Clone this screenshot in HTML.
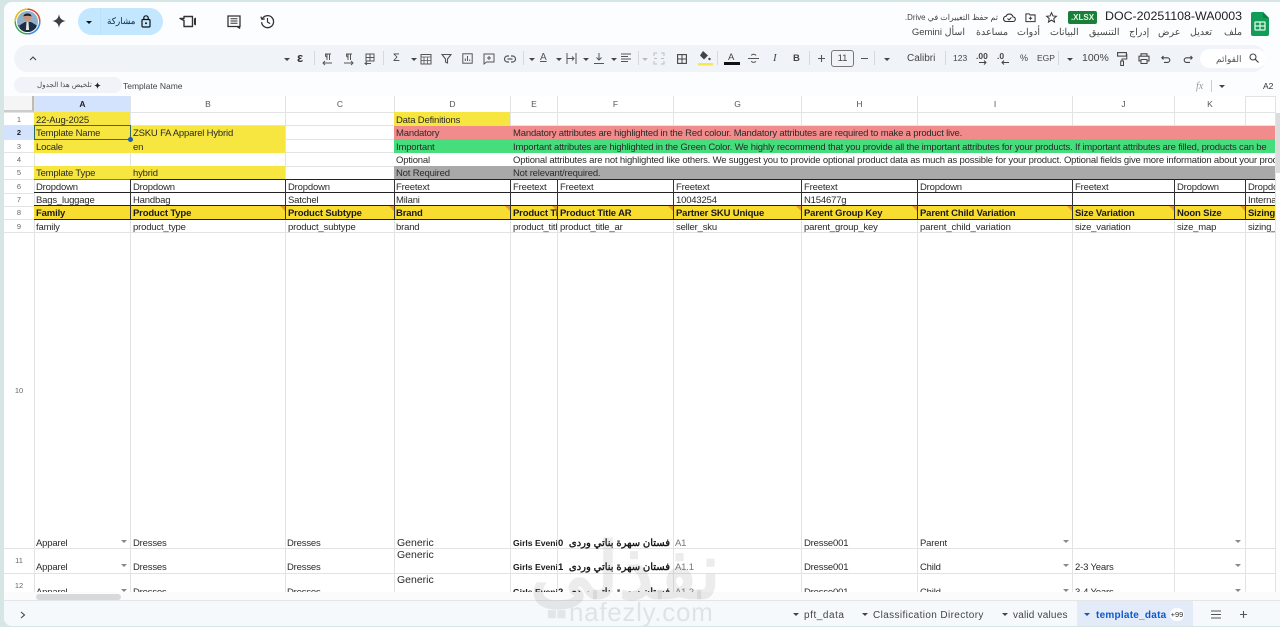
<!DOCTYPE html>
<html lang="en"><head><meta charset="utf-8"><title>DOC-20251108-WA0003</title>
<style>
html,body{margin:0;padding:0;width:1280px;height:627px;overflow:hidden;background:#d6e6e4}
*{box-sizing:border-box}
body{font-family:"Liberation Sans","Noto Sans CJK SC",sans-serif;color:#222}
#app{position:absolute;left:4px;top:2px;width:1276px;height:624px;background:#fcfdff;border-radius:8px 0 0 8px;overflow:hidden}
#root{position:absolute;left:-4px;top:-2px;width:1280px;height:627px}
.a{position:absolute;white-space:nowrap}
.b{position:absolute}
.t{position:absolute;white-space:nowrap;font-size:9.5px;line-height:15px;height:14px;color:#2a2a2a;letter-spacing:-.18px}
.bd{font-weight:bold;color:#1a1a1a;letter-spacing:-.15px}
.h{position:absolute;top:96px;height:16px;line-height:16px;text-align:center;font-size:8.5px;color:#555;background:#fff}
.r{position:absolute;left:4px;width:30px;text-align:center;font-size:7.5px;color:#666;line-height:13px}
.m{font-size:9.5px;color:#444;position:absolute;top:27px;line-height:12px;white-space:nowrap}
.tb{position:absolute;color:#444;font-size:9.5px;line-height:12px;top:52px;white-space:nowrap}
.dd{position:absolute;width:0;height:0;border-left:3px solid transparent;border-right:3px solid transparent;border-top:3px solid #444}
.sep{position:absolute;top:51px;width:1px;height:14px;background:#d5d8dc}
svg{position:absolute;overflow:visible}
.tab{position:absolute;top:609px;font-size:10px;letter-spacing:.38px;color:#444;line-height:13px;white-space:nowrap}
</style></head><body>
<div id="app"><div id="root">

<!-- top bar -->
<svg style="left:14px;top:8px" width="27" height="27" viewBox="0 0 27 27"><defs><clipPath id="av"><circle cx="13.5" cy="13.5" r="10.5"/></clipPath></defs><circle cx="13.5" cy="13.5" r="12.3" fill="none" stroke="#34a853" stroke-width="1.4"/><path d="M13.5 1.2A12.3 12.3 0 0 1 25.8 13.5" fill="none" stroke="#ea4335" stroke-width="1.4"/><path d="M1.2 13.5A12.3 12.3 0 0 1 13.5 1.2" fill="none" stroke="#fbbc04" stroke-width="1.4"/><path d="M25.8 13.5A12.3 12.3 0 0 1 13.5 25.8" fill="none" stroke="#4285f4" stroke-width="1.4"/><g clip-path="url(#av)"><rect width="27" height="27" fill="#8fb0c8"/><rect y="17" width="27" height="10" fill="#47677f"/><path d="M6 27V17l5-3h6l5 3v10z" fill="#1f2d3f"/><circle cx="13.5" cy="9.5" r="3.7" fill="#c89678"/><path d="M9.5 8.5c0-4 8-4 8 0-2-1-6-1-8 0z" fill="#1c1c24"/><path d="M12.5 14h2l.6 8h-3.2z" fill="#dfe6ec"/></g></svg>
<svg style="left:52px;top:14px" width="14" height="14" viewBox="0 0 14 14"><path d="M7 0C7.6 4.3 9.7 6.4 14 7 9.7 7.6 7.6 9.7 7 14 6.4 9.7 4.3 7.6 0 7 4.3 6.4 6.4 4.3 7 0z" fill="#3c4043"/></svg>
<div class="b" style="left:78px;top:8px;width:85px;height:27px;border-radius:14px;background:#c2e7ff"></div>
<div class="b" style="left:100px;top:8px;width:1px;height:27px;background:#bbe1fa"></div>
<div class="dd" style="left:86px;top:21px;border-top-color:#111"></div>
<div class="a" style="left:107px;top:15px;font-size:8.8px;line-height:13px;color:#0a2a44">مشاركة</div>
<svg style="left:141px;top:15px" width="10" height="13" viewBox="0 0 10 13"><rect x="1" y="4.5" width="8" height="7.5" rx="1" fill="none" stroke="#111" stroke-width="1.2"/><path d="M2.8 4.5V3a2.2 2.2 0 0 1 4.4 0v1.5" fill="none" stroke="#111" stroke-width="1.2"/><circle cx="5" cy="8.2" r="1" fill="#111"/></svg>
<svg style="left:179px;top:15px" width="18" height="13" viewBox="0 0 18 13"><path d="M5 1.5h8.5v10H5V5.500L1 3.500h4z" fill="none" stroke="#333" stroke-width="1.4" stroke-linejoin="round"/><path d="M15 3.500l2 -1v8l-2-1z" fill="#333"/></svg>
<svg style="left:227px;top:15px" width="14" height="14" viewBox="0 0 14 14"><path d="M1 1h12v10.500h-1.500l1.500 2-3-2H1z" fill="none" stroke="#333" stroke-width="1.3"/><path d="M3.500 3.800h7M3.500 6h7M3.500 8.200h7" stroke="#333" stroke-width="1"/></svg>
<svg style="left:260px;top:14px" width="15" height="15" viewBox="0 0 15 15"><path d="M2.200 5A6 6 0 1 1 1.600 8.200" fill="none" stroke="#333" stroke-width="1.3"/><path d="M.8 2.600 2 5.400l2.800-.6" fill="none" stroke="#333" stroke-width="1.2"/><path d="M7.500 4v4l2.600 1.600" fill="none" stroke="#333" stroke-width="1.2"/></svg>

<div class="a" style="left:1105px;top:9px;font-size:12.4px;line-height:15px;color:#202124;letter-spacing:0">DOC-20251108-WA0003</div>
<div class="b" style="left:1068px;top:11px;width:29px;height:13px;background:#188038;border-radius:2px;color:#e8f5e9;font-size:8px;font-weight:bold;line-height:13px;text-align:center">.XLSX</div>
<svg style="left:1046px;top:12px" width="11" height="11" viewBox="0 0 12 12"><path d="M6 .8l1.600 3.500 3.700.4-2.800 2.500.8 3.800L6 8.900 2.700 11l.8-3.800L.7 4.700l3.700-.4z" fill="none" stroke="#333" stroke-width="1.1"/></svg>
<svg style="left:1025px;top:12px" width="11" height="11" viewBox="0 0 12 12"><path d="M1 2h3.500l1 1.200H11v7.300H1z" fill="none" stroke="#333" stroke-width="1.1"/><path d="M6 5v3.600M4.200 6.800h3.600" stroke="#333"/></svg>
<svg style="left:1003px;top:12px" width="13" height="11" viewBox="0 0 13 11"><path d="M3.300 9.500a2.600 2.600 0 0 1-.3-5.200 3.700 3.700 0 0 1 7 .6 2.300 2.300 0 0 1 0 4.600z" fill="none" stroke="#333" stroke-width="1.1"/><path d="M4.500 6.500l1.500 1.400 2.400-2.400" fill="none" stroke="#333"/></svg>
<div class="a" style="left:905px;top:13px;width:93px;font-size:7.9px;line-height:10px;color:#444;direction:rtl;text-align:left">تم حفظ التغييرات في Drive.</div>
<svg style="left:1251px;top:12px" width="18" height="24" viewBox="0 0 18 24"><path d="M2 0h10l6 6v16a2 2 0 0 1-2 2H2a2 2 0 0 1-2-2V2a2 2 0 0 1 2-2z" fill="#0f9d58"/><path d="M12 0l6 6h-6z" fill="#0b8043"/><rect x="4" y="10" width="10" height="8" rx=".5" fill="none" stroke="#e8f5e9" stroke-width="1.3"/><path d="M9 10v8M4 14h10" stroke="#e8f5e9" stroke-width="1.2"/></svg>

<div class="m" style="left:1224px">ملف</div>
<div class="m" style="left:1190px">تعديل</div>
<div class="m" style="left:1158px">عرض</div>
<div class="m" style="left:1129px">إدراج</div>
<div class="m" style="left:1089px">التنسيق</div>
<div class="m" style="left:1050px">البيانات</div>
<div class="m" style="left:1017px">أدوات</div>
<div class="m" style="left:976px">مساعدة</div>
<div class="m" style="left:913px;direction:rtl;width:52px;text-align:left">اسأل Gemini</div>

<!-- toolbar -->
<div class="b" style="left:14px;top:45px;width:1252px;height:27px;border-radius:14px;background:#f0f4f9"></div>
<svg style="left:29px;top:56px" width="8" height="5" viewBox="0 0 8 5"><path d="M1 4l3-3 3 3" fill="none" stroke="#444" stroke-width="1.1"/></svg>
<div class="dd" style="left:284px;top:58px"></div>
<div class="tb" style="left:297px;top:52px;font-size:13px;font-weight:bold;color:#333">ε</div>
<div class="sep" style="left:314px"></div>
<svg style="left:322px;top:53px" width="11" height="12" viewBox="0 0 11 12"><path d="M3 1h6M5 1v6M7.500 1v6M5 4a1.500 1.500 0 0 1 0-3" fill="none" stroke="#555"/><path d="M1 10h9M3 8l-2 2 2 2" fill="none" stroke="#555"/></svg>
<svg style="left:343px;top:53px" width="11" height="12" viewBox="0 0 11 12"><path d="M3 1h6M5 1v6M7.500 1v6M5 4a1.500 1.500 0 0 1 0-3" fill="none" stroke="#555"/><path d="M1 10h9M8 8l2 2-2 2" fill="none" stroke="#555"/></svg>
<svg style="left:364px;top:53px" width="11" height="12" viewBox="0 0 11 12"><path d="M2 1h8v7H2zM6 1v7M2 4.500h8" fill="none" stroke="#555"/><path d="M1 10.500h6M3 8.800l-2 1.700 2 1.500" fill="none" stroke="#555"/></svg>
<div class="sep" style="left:383px"></div>
<div class="tb" style="left:393px;top:52px;font-size:11px;color:#444">Σ</div>
<div class="dd" style="left:411px;top:58px"></div>
<svg style="left:420px;top:53px" width="12" height="12" viewBox="0 0 12 12"><rect x="1" y="1.500" width="10" height="9.500" fill="none" stroke="#555"/><path d="M1 4h10M4 4v7M7.500 4v7M1 7.500h10" stroke="#555" stroke-width=".8"/></svg>
<svg style="left:441px;top:53px" width="11" height="11" viewBox="0 0 11 11"><path d="M1 1.500h9L6.500 6v4L4.500 9V6z" fill="none" stroke="#555" stroke-width="1.1"/></svg>
<svg style="left:462px;top:53px" width="11" height="11" viewBox="0 0 11 11"><rect x=".8" y=".8" width="9.400" height="9.400" fill="none" stroke="#555"/><path d="M3.300 8V5.500M5.500 8V3M7.700 8V6.500" stroke="#555"/></svg>
<svg style="left:483px;top:53px" width="12" height="12" viewBox="0 0 12 12"><path d="M1 1h10v8H3.500L1 11z" fill="none" stroke="#555"/><path d="M6 3v4M4 5h4" stroke="#555"/></svg>
<svg style="left:504px;top:55px" width="12" height="8" viewBox="0 0 12 8"><path d="M5 1H3.500a3 3 0 0 0 0 6H5M7 1h1.500a3 3 0 0 1 0 6H7M3.500 4h5" fill="none" stroke="#555" stroke-width="1.200"/></svg>
<div class="sep" style="left:523px"></div>
<div class="dd" style="left:529px;top:58px"></div>
<div class="tb" style="left:540px;top:52px;font-size:10px;color:#555;text-decoration:underline">A</div>
<div class="dd" style="left:556px;top:58px"></div>
<svg style="left:566px;top:53px" width="11" height="11" viewBox="0 0 11 11"><path d="M1 0v11M10 0v11M1 5.500h7M6 3.500l2 2-2 2" fill="none" stroke="#555"/></svg>
<div class="dd" style="left:583px;top:58px"></div>
<svg style="left:594px;top:53px" width="10" height="11" viewBox="0 0 10 11"><path d="M5 0v7M2.500 4.500L5 7l2.500-2.500M0 10.500h10" fill="none" stroke="#555"/></svg>
<div class="dd" style="left:611px;top:58px"></div>
<svg style="left:621px;top:53px" width="10" height="11" viewBox="0 0 10 11"><path d="M0 1h10M0 3.500h7M0 6h10M0 8.500h7" stroke="#555" stroke-width="1.100"/></svg>
<div class="sep" style="left:638px"></div>
<div class="dd" style="left:642px;top:58px;border-top-color:#bbb"></div>
<svg style="left:654px;top:53px" width="10" height="11" viewBox="0 0 10 11"><path d="M0 3V0h3M7 0h3v3M0 8v3h3M7 11h3V8M3 5.500H0M10 5.500H7" fill="none" stroke="#bbb"/></svg>
<svg style="left:677px;top:54px" width="10" height="10" viewBox="0 0 10 10"><rect x=".6" y=".6" width="8.800" height="8.800" fill="none" stroke="#444" stroke-width="1.100"/><path d="M5 .6v8.800M.6 5h8.800" stroke="#444"/></svg>
<svg style="left:698px;top:50px" width="15" height="16" viewBox="0 0 15 16"><path d="M5 1l5 4.500-4 4-4-4z" fill="#444"/><circle cx="11.500" cy="9" r="1.200" fill="#444"/><rect y="13" width="15" height="2.500" fill="#f6e84e"/></svg>
<div class="sep" style="left:717px"></div>
<div class="tb" style="left:728px;top:52px;font-size:9.500px;color:#444">A</div>
<div class="b" style="left:724px;top:62px;width:16px;height:3px;background:#111"></div>
<svg style="left:748px;top:53px" width="11" height="11" viewBox="0 0 11 11"><path d="M0 5.500h11M8 2.500C7 .8 4 .8 3.400 2.500M3.400 8c.6 1.800 3.600 1.800 4.400.2" fill="none" stroke="#555"/></svg>
<div class="tb" style="left:773px;top:52px;font-size:11px;font-style:italic;font-family:'Liberation Serif',serif;color:#444">I</div>
<div class="tb" style="left:793px;top:53px;font-size:9.500px;font-weight:bold;color:#444">B</div>
<div class="sep" style="left:809px"></div>
<svg style="left:817px;top:54px" width="9" height="9" viewBox="0 0 9 9"><path d="M4.500 1v7M1 4.500h7" stroke="#555" stroke-width="1.100"/></svg>
<div class="b" style="left:831px;top:50px;width:23px;height:17px;border:1px solid #777;border-radius:3px;text-align:center;font-size:9.500px;line-height:15px;color:#444">11</div>
<div class="b" style="left:861px;top:58px;width:7px;height:1px;background:#555"></div>
<div class="sep" style="left:874px"></div>
<div class="dd" style="left:884px;top:58px"></div>
<div class="tb" style="left:907px;font-size:10px;top:53px">Calibri</div>
<div class="sep" style="left:945px"></div>
<div class="tb" style="left:953px;font-size:8.500px">123</div>
<div class="tb" style="left:976px;font-size:8.500px;font-weight:bold;top:50px">.00</div>
<svg style="left:979px;top:60px" width="8" height="5" viewBox="0 0 8 5"><path d="M0 2.500h7M5 .500l2 2-2 2" fill="none" stroke="#444"/></svg>
<div class="tb" style="left:997px;font-size:8.500px;font-weight:bold;top:50px">.0</div>
<svg style="left:1001px;top:60px" width="8" height="5" viewBox="0 0 8 5"><path d="M8 2.500H1M3 .500l-2 2 2 2" fill="none" stroke="#444"/></svg>
<div class="tb" style="left:1020px;font-size:9px">%</div>
<div class="tb" style="left:1037px;font-size:8.500px">EGP</div>
<div class="sep" style="left:1058px"></div>
<div class="dd" style="left:1067px;top:58px"></div>
<div class="tb" style="left:1082px;font-size:10.500px">100%</div>
<svg style="left:1117px;top:52px" width="10" height="14" viewBox="0 0 10 14"><rect x=".6" y=".6" width="8.800" height="3.500" fill="none" stroke="#444" stroke-width="1.100"/><path d="M9.400 2.500h.4V7H5v2.500" fill="none" stroke="#444"/><rect x="3.700" y="9" width="2.800" height="4.500" fill="none" stroke="#444"/></svg>
<svg style="left:1138px;top:53px" width="12" height="11" viewBox="0 0 12 11"><path d="M3 3V.8h6V3M3 8H1V3.200h10V8H9" fill="none" stroke="#444" stroke-width="1.100"/><rect x="3" y="6.500" width="6" height="4" fill="none" stroke="#444"/></svg>
<svg style="left:1161px;top:55px" width="10" height="8" viewBox="0 0 10 8"><path d="M2.500 1L.8 2.800l1.700 1.700M1 2.800h5.500a2.300 2.300 0 0 1 0 4.600H3" fill="none" stroke="#444" stroke-width="1.100"/></svg>
<svg style="left:1183px;top:55px" width="10" height="8" viewBox="0 0 10 8"><path d="M7.500 1l1.700 1.800-1.700 1.700M9 2.800H3.500a2.300 2.300 0 0 0 0 4.600H7" fill="none" stroke="#444" stroke-width="1.100"/></svg>
<div class="b" style="left:1200px;top:49px;width:66px;height:19px;border-radius:10px;background:#fff"></div>
<div class="a" style="left:1216px;top:52px;font-size:9px;line-height:14px;color:#555">القوائم</div>
<svg style="left:1249px;top:53px" width="10" height="10" viewBox="0 0 10 10"><circle cx="4" cy="4" r="3" fill="none" stroke="#444" stroke-width="1.100"/><path d="M6.300 6.300L9.500 9.500" stroke="#444" stroke-width="1.200"/></svg>

<!-- formula bar -->
<div class="b" style="left:14px;top:77px;width:108px;height:16px;border-radius:8px;background:#f0f4f9"></div>
<div class="a" style="left:37px;top:79px;font-size:7.2px;line-height:11px;color:#444">تلخيص هذا الجدول</div>
<svg style="left:94px;top:82px" width="7" height="7" viewBox="0 0 14 14"><path d="M7 0C7.600 4.300 9.700 6.400 14 7 9.700 7.600 7.600 9.700 7 14 6.400 9.700 4.300 7.600 0 7 4.300 6.400 6.400 4.300 7 0z" fill="#222"/></svg>
<div class="a" style="left:123px;top:81px;font-size:8.500px;line-height:11px;color:#444">Template Name</div>
<div class="a" style="left:1196px;top:80px;font-size:10px;line-height:13px;font-style:italic;font-family:'Liberation Serif',serif;color:#999">fx</div>
<div class="b" style="left:1211px;top:80px;width:1px;height:12px;background:#ccc"></div>
<div class="dd" style="left:1219px;top:85px"></div>
<div class="a" style="left:1263px;top:81px;font-size:8.500px;line-height:11px;color:#333">A2</div>

<!-- sheet background + light grid -->
<div class="b" style="left:4px;top:96px;width:1271px;height:496px;background:#fff"></div>
<svg style="left:0;top:0" width="1280" height="627">
<g stroke="#e2e3e3" stroke-width="1" fill="none">
<path d="M34.500 96V592M130.500 96V592M285.500 96V592M394.500 96V592M510.500 96V592M557.500 96V592M673.500 96V592M801.500 96V592M917.500 96V592M1072.500 96V592M1174.500 96V592M1245.500 96V592M1275.500 96V592"/>
<path d="M4 96.500H1275M4 112.500H1275M4 125.500H1275M4 139.500H394M4 152.500H394M4 166.500H394M4 179.500H34M4 193.500H34M4 206.500H34M4 219.500H34M4 232.500H1275M4 548.500H1275M4 573.500H1275M4 592.500H1275"/>
</g>
</svg>

<!-- fills -->
<div class="b" style="left:34px;top:112px;width:96px;height:14px;background:#f7e540"></div>
<div class="b" style="left:34px;top:126px;width:251px;height:27px;background:#f7e540"></div>
<div class="b" style="left:34px;top:166px;width:251px;height:13px;background:#f7e540"></div>
<div class="b" style="left:394px;top:112px;width:116px;height:14px;background:#f7e540"></div>
<div class="b" style="left:394px;top:126px;width:881px;height:13px;background:#f28b8b"></div>
<div class="b" style="left:394px;top:139px;width:881px;height:13.500px;background:#46dd7c"></div>
<div class="b" style="left:394px;top:152.500px;width:881px;height:13.500px;background:#fff"></div>
<div class="b" style="left:394px;top:166px;width:881px;height:13px;background:#a9a9a9"></div>
<div class="b" style="left:34px;top:206px;width:1241px;height:13.500px;background:#f8dd30"></div>

<!-- black borders -->
<svg style="left:0;top:0" width="1280" height="627">
<path d="M130 179.500H1275" stroke="#222"/>
<path d="M34 179.500H130" stroke="#777"/>
<path d="M34 192.500H1275M34 205.500H1275M34 219.500H1275" stroke="#222"/>
<path d="M130.500 179V219.500M285.500 179V219.500M394.500 179V219.500M510.500 179V219.500M557.500 179V219.500M673.500 179V219.500M801.500 179V219.500M917.500 179V219.500M1072.500 179V219.500M1174.500 179V219.500M1245.500 179V219.500" stroke="#333"/>
<path d="M280 206h5v5zM389 206h5v5zM505 206h5v5zM552 206h5v5zM668 206h5v5zM796 206h5v5zM912 206h5v5zM1067 206h5v5zM1169 206h5v5zM1240 206h5v5z" fill="#e89a2c"/>
</svg>

<!-- column heads -->
<div class="b" style="left:4px;top:96px;width:30px;height:16px;background:#f5f5f5;border-right:2px solid #bbb;border-bottom:2px solid #ccc"></div>
<div class="h" style="left:35px;width:95px;background:#d3e3fd;font-weight:bold;color:#222">A</div>
<div class="h" style="left:131px;width:154px">B</div>
<div class="h" style="left:286px;width:108px">C</div>
<div class="h" style="left:395px;width:115px">D</div>
<div class="h" style="left:511px;width:46px">E</div>
<div class="h" style="left:558px;width:115px">F</div>
<div class="h" style="left:674px;width:127px">G</div>
<div class="h" style="left:802px;width:115px">H</div>
<div class="h" style="left:918px;width:154px">I</div>
<div class="h" style="left:1073px;width:101px">J</div>
<div class="h" style="left:1175px;width:70px">K</div>
<div class="b" style="left:4px;top:126px;width:30px;height:13px;background:#d3e3fd"></div>
<div class="r" style="top:113px">1</div>
<div class="r" style="top:126px;font-weight:bold;color:#222">2</div>
<div class="r" style="top:140px">3</div>
<div class="r" style="top:153px">4</div>
<div class="r" style="top:166px">5</div>
<div class="r" style="top:180px">6</div>
<div class="r" style="top:193px">7</div>
<div class="r" style="top:206px">8</div>
<div class="r" style="top:220px">9</div>
<div class="r" style="top:384px">10</div>
<div class="r" style="top:554px">11</div>
<div class="r" style="top:579px">12</div>

<!-- rows 1-5 -->
<div class="t" style="left:36px;top:113px">22-Aug-2025</div>
<div class="t" style="left:396px;top:113px">Data Definitions</div>
<div class="t" style="left:36px;top:126px">Template Name</div>
<div class="t" style="left:133px;top:126px">ZSKU FA Apparel Hybrid</div>
<div class="t" style="left:396px;top:126px">Mandatory</div>
<div class="t" style="left:513px;top:126px">Mandatory attributes are highlighted in the Red colour. Mandatory attributes are required to make a product live.</div>
<div class="t" style="left:36px;top:140px">Locale</div>
<div class="t" style="left:133px;top:140px">en</div>
<div class="t" style="left:396px;top:140px">Important</div>
<div class="b" style="left:513px;top:140px;width:762px;height:14px;overflow:hidden"><div class="t" style="left:0;top:0">Important attributes are highlighted in the Green Color. We highly recommend that you provide all the important attributes for your products. If important attributes are filled, products can be</div></div>
<div class="t" style="left:396px;top:153px">Optional</div>
<div class="b" style="left:513px;top:153px;width:762px;height:14px;overflow:hidden"><div class="t" style="left:0;top:0">Optional attributes are not highlighted like others. We suggest you to provide optional product data as much as possible for your product. Optional fields give more information about your product</div></div>
<div class="t" style="left:36px;top:166px">Template Type</div>
<div class="t" style="left:133px;top:166px">hybrid</div>
<div class="t" style="left:396px;top:166px">Not Required</div>
<div class="t" style="left:513px;top:166px">Not relevant/required.</div>
<div class="b" style="left:34px;top:125px;width:97px;height:14.500px;border:1.500px solid #2f6b63"></div>
<div class="b" style="left:128px;top:137px;width:5px;height:5px;border-radius:50%;background:#1a5fb4"></div>

<!-- row 6 -->
<div class="t" style="left:36px;top:180px">Dropdown</div><div class="t" style="left:133px;top:180px">Dropdown</div><div class="t" style="left:288px;top:180px">Dropdown</div><div class="t" style="left:396px;top:180px">Freetext</div><div class="t" style="left:513px;top:180px">Freetext</div><div class="t" style="left:560px;top:180px">Freetext</div><div class="t" style="left:676px;top:180px">Freetext</div><div class="t" style="left:804px;top:180px">Freetext</div><div class="t" style="left:920px;top:180px">Dropdown</div><div class="t" style="left:1075px;top:180px">Freetext</div><div class="t" style="left:1177px;top:180px">Dropdown</div>
<div class="b" style="left:1248px;top:180px;width:27px;height:13px;overflow:hidden"><div class="t" style="left:0;top:0">Dropdown</div></div>
<!-- row 7 -->
<div class="t" style="left:36px;top:193px">Bags_luggage</div><div class="t" style="left:133px;top:193px">Handbag</div><div class="t" style="left:288px;top:193px">Satchel</div><div class="t" style="left:396px;top:193px">Milani</div><div class="t" style="left:676px;top:193px">10043254</div><div class="t" style="left:804px;top:193px">N154677g</div>
<div class="b" style="left:1248px;top:193px;width:27px;height:13px;overflow:hidden"><div class="t" style="left:0;top:0">International</div></div>
<!-- row 8 -->
<div class="t bd" style="left:36px;top:206px">Family</div><div class="t bd" style="left:133px;top:206px">Product Type</div><div class="t bd" style="left:288px;top:206px">Product Subtype</div><div class="t bd" style="left:396px;top:206px">Brand</div>
<div class="b" style="left:513px;top:206px;width:44px;height:14px;overflow:hidden"><div class="t bd" style="left:0;top:0">Product Title</div></div>
<div class="t bd" style="left:560px;top:206px">Product Title AR</div><div class="t bd" style="left:676px;top:206px">Partner SKU Unique</div><div class="t bd" style="left:804px;top:206px">Parent Group Key</div><div class="t bd" style="left:920px;top:206px">Parent Child Variation</div><div class="t bd" style="left:1075px;top:206px">Size Variation</div><div class="t bd" style="left:1177px;top:206px">Noon Size</div>
<div class="b" style="left:1248px;top:206px;width:27px;height:14px;overflow:hidden"><div class="t bd" style="left:0;top:0">Sizing</div></div>
<!-- row 9 -->
<div class="t" style="left:36px;top:220px">family</div><div class="t" style="left:133px;top:220px">product_type</div><div class="t" style="left:288px;top:220px">product_subtype</div><div class="t" style="left:396px;top:220px">brand</div>
<div class="b" style="left:513px;top:220px;width:44px;height:14px;overflow:hidden"><div class="t" style="left:0;top:0">product_title</div></div>
<div class="t" style="left:560px;top:220px">product_title_ar</div><div class="t" style="left:676px;top:220px">seller_sku</div><div class="t" style="left:804px;top:220px">parent_group_key</div><div class="t" style="left:920px;top:220px;letter-spacing:-.1px">parent_child_variation</div><div class="t" style="left:1075px;top:220px">size_variation</div><div class="t" style="left:1177px;top:220px">size_map</div>
<div class="b" style="left:1248px;top:220px;width:27px;height:14px;overflow:hidden"><div class="t" style="left:0;top:0">sizing_</div></div>

<!-- rows 10-12 -->
<div class="b" style="left:4px;top:533px;width:1271px;height:59px;overflow:hidden">
<div class="t" style="left:32px;top:3px">Apparel</div><div class="t" style="left:129px;top:3px">Dresses</div><div class="t" style="left:283px;top:3px">Dresses</div>
<div class="t" style="left:393px;top:3px;font-size:10.500px;letter-spacing:0">Generic</div>
<div class="b" style="left:509px;top:3px;width:44px;height:14px;overflow:hidden"><div class="t bd" style="left:0;top:0;font-size:8.600px;letter-spacing:0">Girls Evening</div></div>
<div class="t bd" style="left:554px;top:3px;font-size:9.500px;letter-spacing:0">0</div>
<div class="t bd" style="left:561px;top:3px;font-size:10px;letter-spacing:0;width:105px;text-align:right;direction:rtl">فستان سهرة بناتي وردى</div>
<div class="t" style="left:671px;top:3px;color:#777">A1</div>
<div class="t" style="left:800px;top:3px">Dresse001</div><div class="t" style="left:916px;top:3px">Parent</div>

<div class="t" style="left:32px;top:27px">Apparel</div><div class="t" style="left:129px;top:27px">Dresses</div><div class="t" style="left:283px;top:27px">Dresses</div>
<div class="t" style="left:393px;top:15px;font-size:10.500px;letter-spacing:0">Generic</div>
<div class="b" style="left:509px;top:27px;width:44px;height:14px;overflow:hidden"><div class="t bd" style="left:0;top:0;font-size:8.600px;letter-spacing:0">Girls Evening</div></div>
<div class="t bd" style="left:554px;top:27px;font-size:9.500px;letter-spacing:0">1</div>
<div class="t bd" style="left:561px;top:27px;font-size:10px;letter-spacing:0;width:105px;text-align:right;direction:rtl">فستان سهرة بناتي وردى</div>
<div class="t" style="left:671px;top:27px;color:#777">A1.1</div>
<div class="t" style="left:800px;top:27px">Dresse001</div><div class="t" style="left:916px;top:27px">Child</div><div class="t" style="left:1071px;top:27px">2-3 Years</div>

<div class="t" style="left:32px;top:52px">Apparel</div><div class="t" style="left:129px;top:52px">Dresses</div><div class="t" style="left:283px;top:52px">Dresses</div>
<div class="t" style="left:393px;top:40px;font-size:10.500px;letter-spacing:0">Generic</div>
<div class="b" style="left:509px;top:52px;width:44px;height:14px;overflow:hidden"><div class="t bd" style="left:0;top:0;font-size:8.600px;letter-spacing:0">Girls Evening</div></div>
<div class="t bd" style="left:554px;top:52px;font-size:9.500px;letter-spacing:0">2</div>
<div class="t bd" style="left:561px;top:52px;font-size:10px;letter-spacing:0;width:105px;text-align:right;direction:rtl">فستان سهرة بناتي وردى</div>
<div class="t" style="left:671px;top:52px;color:#777">A1.2</div>
<div class="t" style="left:800px;top:52px">Dresse001</div><div class="t" style="left:916px;top:52px">Child</div><div class="t" style="left:1071px;top:52px">3-4 Years</div>
</div>
<div class="dd" style="left:121px;top:540px;border-top-color:#888"></div><div class="dd" style="left:121px;top:564px;border-top-color:#888"></div><div class="dd" style="left:121px;top:589px;border-top-color:#888"></div>
<div class="dd" style="left:1063px;top:540px;border-top-color:#888"></div><div class="dd" style="left:1063px;top:564px;border-top-color:#888"></div><div class="dd" style="left:1063px;top:589px;border-top-color:#888"></div>
<div class="dd" style="left:1235px;top:540px;border-top-color:#888"></div><div class="dd" style="left:1235px;top:564px;border-top-color:#888"></div><div class="dd" style="left:1235px;top:589px;border-top-color:#888"></div>

<!-- scrollbars -->
<div class="b" style="left:1276px;top:113px;width:4px;height:60px;background:#dcdcdc"></div>
<div class="b" style="left:0;top:592px;width:1280px;height:9px;background:#fbfbfb;border-bottom:1px solid #e3e5e8"></div>
<div class="b" style="left:36px;top:594px;width:85px;height:6px;border-radius:3px;background:#d8d9da"></div>

<!-- tabs -->
<div class="b" style="left:4px;top:601px;width:1276px;height:25px;background:#f5f9fc"></div>
<svg style="left:20px;top:611px" width="6" height="8" viewBox="0 0 6 8"><path d="M1 1l3.500 3L1 7" fill="none" stroke="#444" stroke-width="1.100"/></svg>
<div class="dd" style="left:793px;top:613px"></div><div class="tab" style="left:804px;letter-spacing:.55px">pft_data</div>
<div class="dd" style="left:862px;top:613px"></div><div class="tab" style="left:873px">Classification Directory</div>
<div class="dd" style="left:1002px;top:613px"></div><div class="tab" style="left:1013px;letter-spacing:.2px">valid values</div>
<div class="b" style="left:1077px;top:601px;width:116px;height:25px;background:#e3ebf8"></div>
<div class="dd" style="left:1084px;top:613px;border-top-color:#0b57d0"></div>
<div class="tab" style="left:1096px;color:#0b57d0;font-weight:bold;letter-spacing:.25px">template_data</div>
<div class="b" style="left:1170px;top:608px;width:14px;height:13px;border-radius:7px;background:#fff;font-size:7.500px;line-height:13px;text-align:center;color:#333">+99</div>
<svg style="left:1211px;top:610px" width="10" height="9" viewBox="0 0 10 9"><path d="M0 1h10M0 4.500h10M0 8h10" stroke="#555" stroke-width="1.100"/></svg>
<svg style="left:1239px;top:610px" width="9" height="9" viewBox="0 0 9 9"><path d="M4.500 1v7M1 4.500h7" stroke="#555" stroke-width="1.100"/></svg>

<!-- watermark -->
<div class="a" style="left:530px;top:536px;width:170px;text-align:center;font-size:78px;line-height:70px;font-weight:bold;color:rgba(120,120,120,.14);pointer-events:none">نفذلي</div>
<div class="a" style="left:569px;top:598px;font-size:26px;line-height:28px;color:rgba(120,120,120,.17);letter-spacing:.7px">nafezly.com</div>

</div></div>
</body></html>
